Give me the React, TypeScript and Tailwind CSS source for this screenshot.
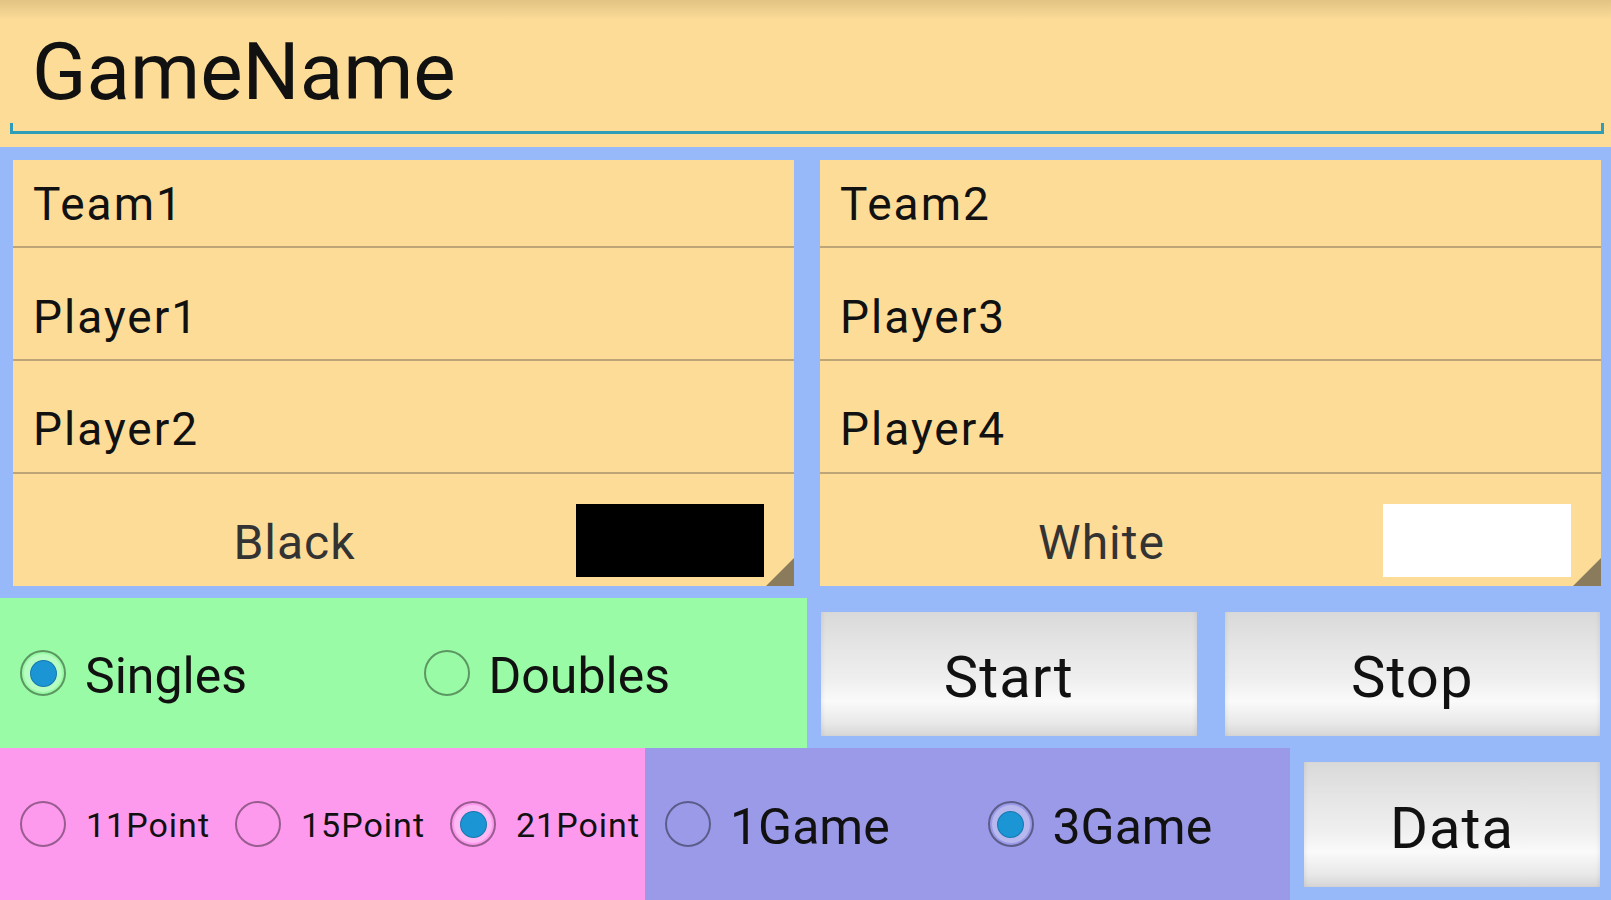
import React from "react"

export default function App() {
  return (
    <div className="w-[1611px] h-[900px] flex flex-col overflow-hidden bg-[#98b9f9] text-[#111] font-['Roboto',sans-serif]">
      <header className="h-[147px] shrink-0 flex flex-col bg-[linear-gradient(to_bottom,#e2c383_0px,#fddc98_20px)]">
        <div className="pl-[32px] pt-[32px] text-[80px] leading-none">GameName</div>
        <div className="ml-[10px] mr-[7px] mt-[11px] h-[11px] border-x-[3px] border-b-[3px] border-[#2f9db8]" />
      </header>

      <div className="flex gap-[26px] pl-[13px] pr-[10px] pt-[13px] pb-[12px]">
        <TeamPanel team="Team1" p1="Player1" p2="Player2" color="Black" swatch="bg-black" />
        <TeamPanel team="Team2" p1="Player3" p2="Player4" color="White" swatch="bg-white" />
      </div>

      <div className="h-[150px] flex">
        <div className="w-[807px] flex items-center bg-[#99fba5]">
          <Radio label="Singles" checked textSize="text-[50px] pt-[6px]" />
          <Radio label="Doubles" textSize="text-[50px] pt-[6px]" />
        </div>
        <div className="flex-1 flex gap-[28px] pl-[14px] pr-[11px] pt-[14px] pb-[12px]">
          <Button label="Start" />
          <Button label="Stop" />
        </div>
      </div>

      <div className="h-[152px] flex">
        <div className="w-[645px] flex items-center bg-[#fe9aee]">
          <Radio label="11Point" textSize="text-[34px] tracking-[1px] pt-[2px]" gap="gap-[20px]" />
          <Radio label="15Point" textSize="text-[34px] tracking-[1px] pt-[2px]" gap="gap-[20px]" />
          <Radio label="21Point" checked textSize="text-[34px] tracking-[1px] pt-[2px]" gap="gap-[20px]" />
        </div>
        <div className="w-[645px] flex items-center bg-[#9a9ae8]">
          <Radio label="1Game" textSize="text-[50px] pt-[6px]" />
          <Radio label="3Game" checked textSize="text-[50px] pt-[6px]" />
        </div>
        <div className="flex-1 flex pl-[14px] pr-[11px] pt-[14px] pb-[13px]">
          <Button label="Data" />
        </div>
      </div>
    </div>
  )
}

interface TeamPanelProps {
  team: string
  p1: string
  p2: string
  color: string
  swatch: string
}

function TeamPanel(props: TeamPanelProps) {
  return (
    <div className="flex-1 h-[426px] flex flex-col bg-[#fddc98]">
      <div className="h-[88px] shrink-0 border-b-2 border-[#bda577] pl-[20px] pt-[21px] text-[46px] tracking-[2px] leading-none">
        {props.team}
      </div>
      <div className="h-[113px] shrink-0 border-b-2 border-[#bda577] pl-[20px] pt-[46px] text-[46px] tracking-[2px] leading-none">
        {props.p1}
      </div>
      <div className="h-[113px] shrink-0 border-b-2 border-[#bda577] pl-[20px] pt-[45px] text-[46px] tracking-[2px] leading-none">
        {props.p2}
      </div>
      <div className="relative flex-1 flex items-start pt-[30px] pr-[30px]">
        <div className="flex-1 pt-[15px] text-center text-[48px] tracking-[1px] leading-none text-[#333]">{props.color}</div>
        <div className={"w-[188px] h-[73px] " + props.swatch} />
        <div className="absolute right-0 bottom-0 w-[28px] h-[28px] bg-[#8a7b5c] [clip-path:polygon(100%_0,100%_100%,0_100%)]" />
      </div>
    </div>
  )
}

interface RadioProps {
  label: string
  checked?: boolean
  textSize: string
  gap?: string
}

function Radio(props: RadioProps) {
  return (
    <div className={"flex-1 flex items-center pl-[20px] " + (props.gap ?? "gap-[19px]")}>
      <div className="w-[46px] h-[46px] shrink-0 rounded-full border-2 border-black/40 flex items-center justify-center">
        {props.checked && (
          <div className="w-[38px] h-[38px] rounded-full bg-white/30 flex items-center justify-center">
            <div className="w-[27px] h-[27px] rounded-full bg-[#1b95d4] border border-[#13679a]/60" />
          </div>
        )}
      </div>
      <span className={props.textSize + " leading-none"}>{props.label}</span>
    </div>
  )
}

function Button({ label }: { label: string }) {
  return (
    <div className="flex-1 flex items-center justify-center pt-[6px] text-[58px] tracking-[1px] leading-none bg-[linear-gradient(to_bottom,#d9d9d9_0%,#e6e6e6_30%,#efefef_55%,#fafafa_72%,#e8e8e8_90%,#d5d5d5_100%)] shadow-[inset_4px_0_4px_-3px_rgba(0,0,0,0.08),inset_-4px_0_4px_-3px_rgba(0,0,0,0.08)]">
      {label}
    </div>
  )
}
